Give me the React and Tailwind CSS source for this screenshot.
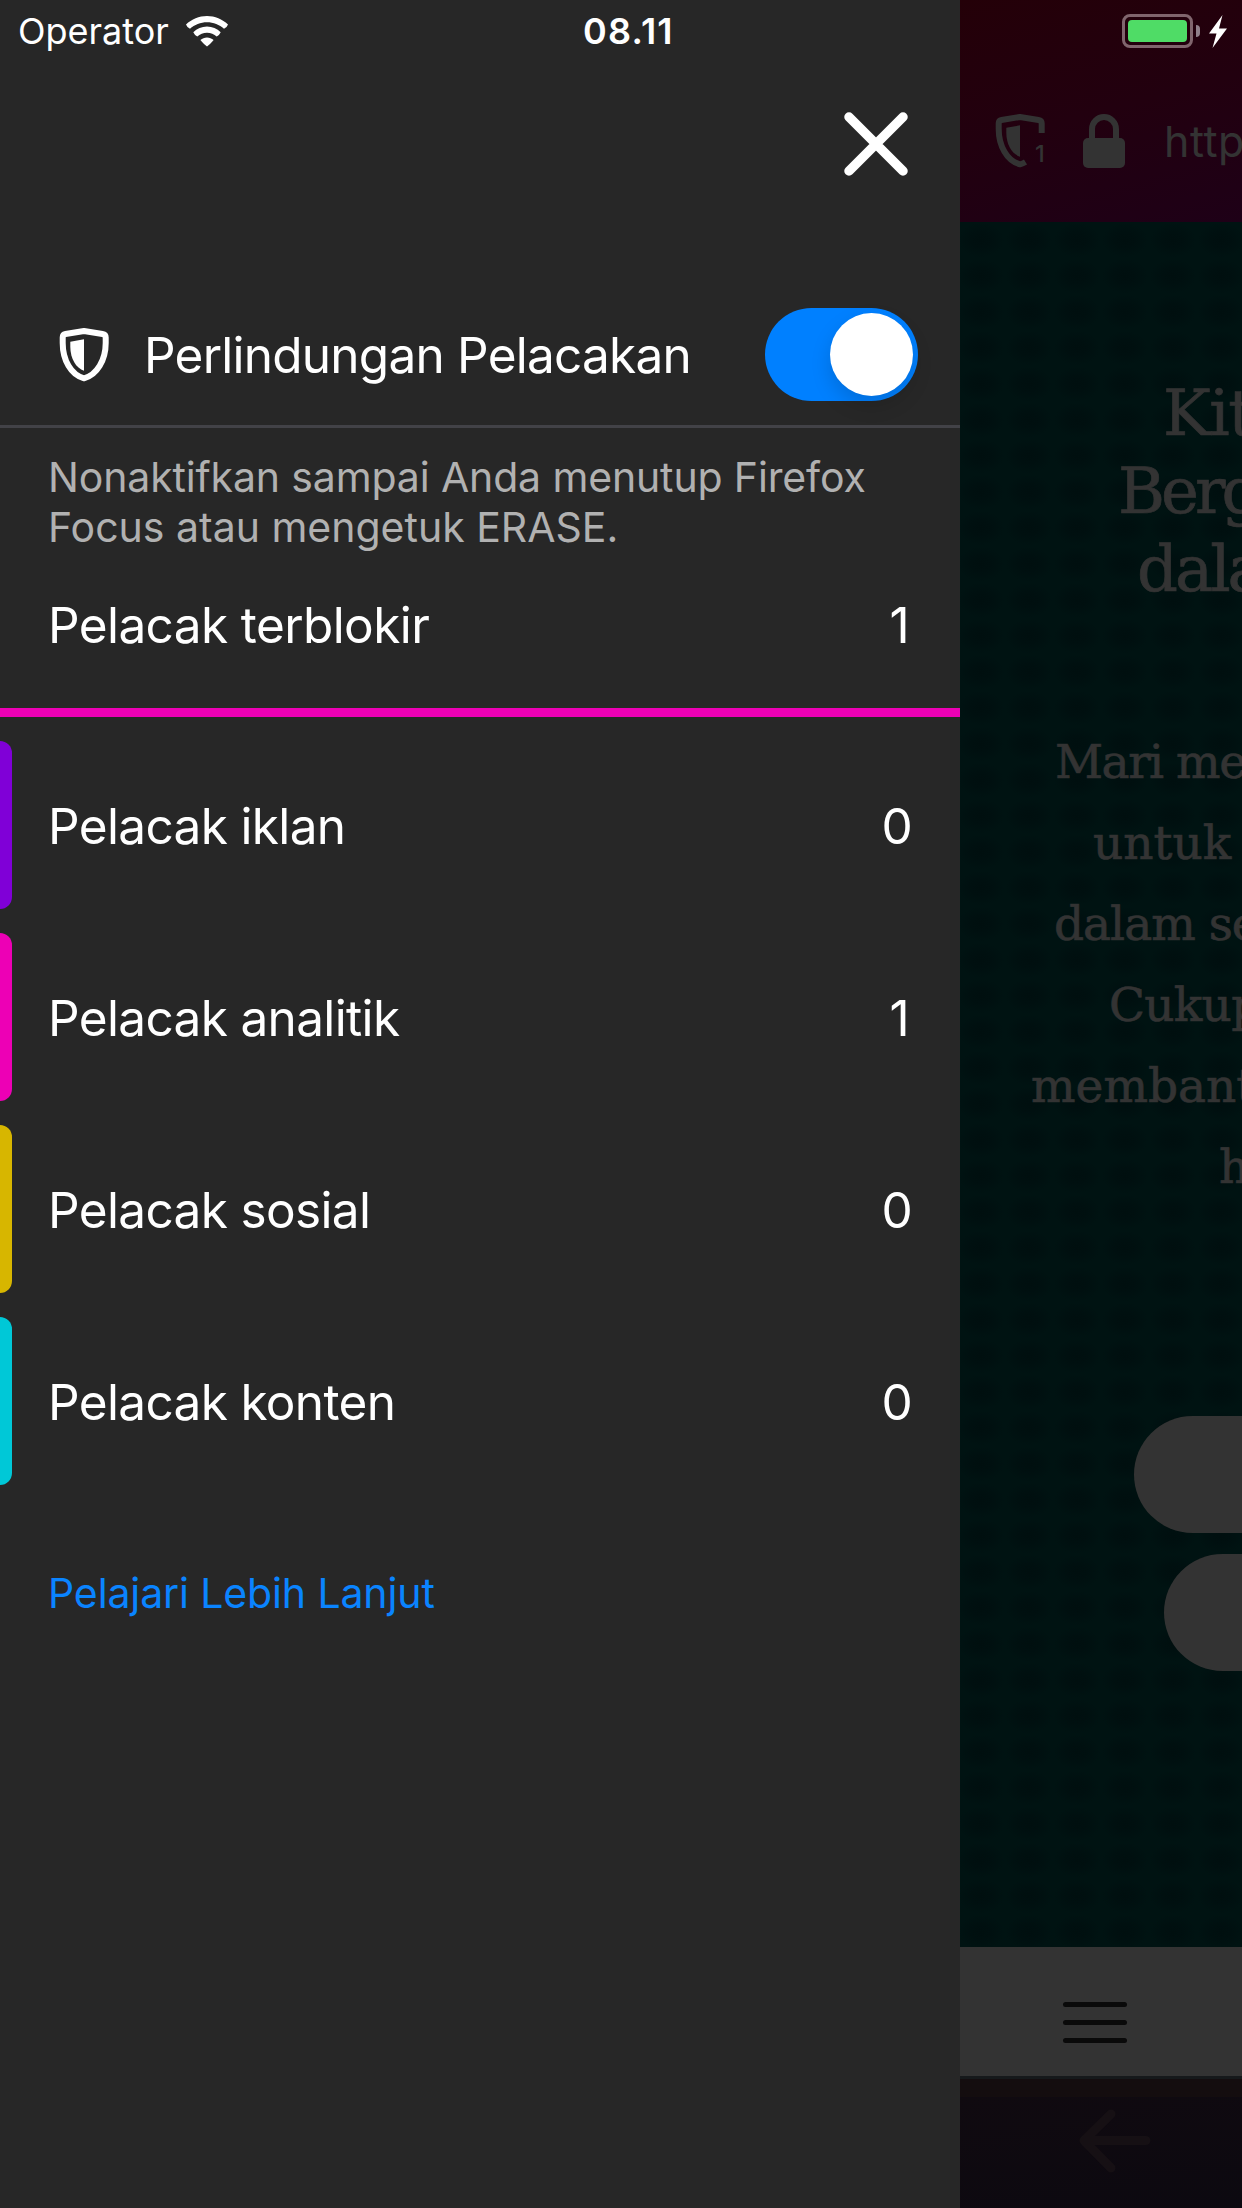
import React from "react";

const trackers = [
  { label: "Pelacak iklan", count: 0, color: "bg-[#8000d7]" },
  { label: "Pelacak analitik", count: 1, color: "bg-[#ed00b5]" },
  { label: "Pelacak sosial", count: 0, color: "bg-[#d7b600]" },
  { label: "Pelacak konten", count: 0, color: "bg-[#00c8d7]" },
];

function StatusBar() {
  return (
    <div className="absolute inset-x-0 top-0 z-20 flex h-[62px] items-center text-[36px] leading-none text-white">
      <span className="ml-[18px] w-[168px]">Operator</span>
      <svg className="h-[31px] w-[42px]" viewBox="0 0 42 31" fill="white">
        <path d="M21 0C13 0 5.700 3.200 0 8.500Q1 11.500 4 12.700C8.600 8.600 14.500 6.200 21 6.200S33.400 8.600 38 12.700Q41 11.500 42 8.500C36.300 3.200 29 0 21 0Z" />
        <path d="M21 10.500C15.700 10.500 11 12.700 7.300 16.300Q8.500 19.200 11.300 20.500C13.900 18 17.300 16.700 21 16.700S28.100 18 30.700 20.500Q33.500 19.200 34.700 16.300C31 12.700 26.300 10.500 21 10.500Z" />
        <path d="M21 21.500C18.500 21.500 16.300 22.500 14.400 24Q16 26 18 28L21 30.500L24 28Q26 26 27.600 24C25.700 22.500 23.500 21.500 21 21.500Z" />
      </svg>
      <span className="ml-[355px] font-semibold tracking-[1.2px]">08.11</span>
      <div className="ml-auto flex items-center pr-[15px]">
        <div className="h-[34px] w-[71px] rounded-[8px] border-[3px] border-[#80656d] p-[3px]">
          <div className="h-full w-full rounded-[4px] bg-[#4fdc66]" />
        </div>
        <div className="ml-[3px] h-3 w-1 rounded-r-full bg-[#90808a]" />
        <svg className="ml-[9px] h-[33px] w-[18px]" viewBox="0 0 18 33" fill="white">
          <path d="M13.500 0L0 18.500H7.500L3.500 33L18 13.500H10Z" />
        </svg>
      </div>
    </div>
  );
}

function Shield() {
  return (
    <svg className="h-[60px] w-[56px]" viewBox="56 324 56 60">
      <path
        d="M84 330L102.500 333Q105.700 333.500 105.700 336.500V342C105.700 359 97 374 84 377.300C71 374 62.700 359 62.700 342V336.500Q62.700 333.500 65.500 333Z"
        fill="none" stroke="white" strokeWidth="6" strokeLinejoin="round"
      />
      <path d="M84 338.300L70.300 340.700V346C70.500 358 76 367 84 369.700Z" fill="white" />
    </svg>
  );
}

function Toggle() {
  return (
    <div className="flex h-[93px] w-[153px] items-center justify-end overflow-visible rounded-full bg-[#0080ff] pr-[5px]">
      <div className="size-[83px] rounded-full bg-white shadow-[0_9px_20px_rgba(0,0,0,0.15)]" />
    </div>
  );
}

function Count({ value }) {
  return <span className={value === 1 ? "pr-[3px]" : ""}>{value}</span>;
}

function Drawer() {
  return (
    <aside className="flex w-[960px] shrink-0 flex-col bg-[#272727] text-white">
      <div className="flex h-[284px] justify-end pt-[112px] pr-[52px]">
        <svg className="size-[64px]" viewBox="0 0 64 64" stroke="white" strokeWidth="9.500" strokeLinecap="round">
          <path d="M5 5L59 59M59 5L5 59" />
        </svg>
      </div>
      <div className="flex h-[144px] items-center border-b-[3px] border-[#424247] pr-[42px] pl-14">
        <Shield />
        <span className="ml-8 flex-1 pt-[2px] text-[49.5px] tracking-[-0.76px]">Perlindungan Pelacakan</span>
        <Toggle />
      </div>
      <p className="mt-6 pl-[48px] text-[41px] leading-[50px] tracking-[-0.14px] text-[#b1b1b1]">
        Nonaktifkan sampai Anda menutup Firefox
        <br />
        <span className="tracking-[0px]">Focus atau mengetuk ERASE.</span>
      </p>
      <div className="mb-[10px] flex h-[146px] items-center justify-between pr-12 pl-[48px] text-[49.5px] tracking-[-0.6px]">
        <span>Pelacak terblokir</span>
        <Count value={1} />
      </div>
      <div className="mb-3 h-[9px] bg-[#ed00b5]" />
      {trackers.map((t) => (
        <div key={t.label} className="flex h-[192px]">
          <div className={"mt-3 h-[168px] w-3 rounded-r-[12px] " + t.color} />
          <div className="flex flex-1 items-center justify-between pt-[3px] pr-12 pl-[36px] text-[49.5px] tracking-[-0.65px]">
            <span>{t.label}</span>
            <Count value={t.count} />
          </div>
        </div>
      ))}
      <a className="flex h-[192px] items-center pt-[2px] pl-[48px] text-[41px] tracking-[-0.12px] text-[#0a84ff]">Pelajari Lebih Lanjut</a>
    </aside>
  );
}

function Browser() {
  return (
    <main className="flex flex-1 flex-col overflow-hidden whitespace-nowrap text-[#333333]">
      <header className="flex h-[222px] items-start bg-[linear-gradient(165deg,#240008_0%,#22000f_50%,#1e0017_100%)] pt-[111px] pl-[32px]">
        <svg className="h-[60px] w-[56px] shrink-0" viewBox="56 324 56 60">
          <path
            d="M105.700 346V336.500Q105.700 333.500 102.500 333L84 330L65.500 333Q62.700 333.500 62.700 336.500V342C62.700 359 71 374 84 377.300Q87 376.500 89.500 375"
            fill="none" stroke="#333333" strokeWidth="6" strokeLinejoin="round"
          />
          <path d="M84 338.300L70.300 340.700V346C70.500 358 76 367 84 369.700Z" fill="#333333" />
          <text x="99" y="375" fill="#333333" fontSize="23.500" fontWeight="500">1</text>
        </svg>
        <svg className="mt-[3px] ml-[35px] h-[54px] w-[42px] shrink-0" viewBox="0 0 42 54">
          <rect x="0" y="24" width="42" height="30" rx="5" fill="#333333" />
          <path d="M9 27V15A12 12 0 0 1 33 15V27" fill="none" stroke="#333333" strokeWidth="6" />
        </svg>
        <span className="ml-[39px] text-[43px] leading-[60px] tracking-[0.5px]">http</span>
      </header>
      <section className="flex h-[1725px] flex-col bg-[#001312] bg-[radial-gradient(ellipse_at_center,#000f0f_0%,#001010_30%,#001312_68%)] bg-[length:48px_36px] bg-[position:-3px_0px] pt-[152px] font-['DejaVu_Serif',serif] [-webkit-text-stroke:0.7px_#333333]">
        <h1 className="text-[64px] leading-[78px]">
          <div className="pl-[203px] tracking-[-1.5px]">Kit</div>
          <div className="pl-[158px] tracking-[-4px]">Berg</div>
          <div className="pl-[177px] tracking-[-3px]">dala</div>
        </h1>
        <div className="mt-[113px] text-[47px] leading-[81px]">
          <div className="pl-[95px] tracking-[-1.5px]">Mari me</div>
          <div className="pl-[133px]">untuk</div>
          <div className="pl-[94px] tracking-[-1px]">dalam se</div>
          <div className="pl-[149px] tracking-[-0.7px]">Cukup</div>
          <div className="pl-[71px]">membant</div>
          <div className="pl-[259px]">h</div>
        </div>
        <div className="mt-[209px] ml-[174px] h-[117px] rounded-l-full bg-[#333333]" />
        <div className="mt-[21px] ml-[204px] h-[117px] rounded-l-full bg-[#333333]" />
      </section>
      <div className="flex h-[132px] flex-col gap-[13px] border-b-[3px] border-[#16191b] bg-[#333333] pt-[55px] pl-[103px]">
        <div className="h-[5px] w-16 rounded-full bg-[#0a0a0a]" />
        <div className="h-[5px] w-16 rounded-full bg-[#0a0a0a]" />
        <div className="h-[5px] w-16 rounded-full bg-[#0a0a0a]" />
      </div>
      <div className="h-[18px] bg-[#140d0f]" />
      <footer className="h-[111px] bg-[linear-gradient(170deg,#100a10,#0c0910)] pt-3 pl-[119px]">
        <svg className="h-[64px] w-[73px]" viewBox="0 0 73 64" fill="none" stroke="#161014" strokeWidth="9" strokeLinecap="round" strokeLinejoin="round">
          <path d="M32 5L5 31.500L32 59M5 31.500H67" />
        </svg>
      </footer>
    </main>
  );
}

export default function App() {
  return (
    <div className="relative flex h-[2208px] w-[1242px] overflow-hidden bg-black font-[Inter,sans-serif]">
      <StatusBar />
      <Drawer />
      <Browser />
    </div>
  );
}
